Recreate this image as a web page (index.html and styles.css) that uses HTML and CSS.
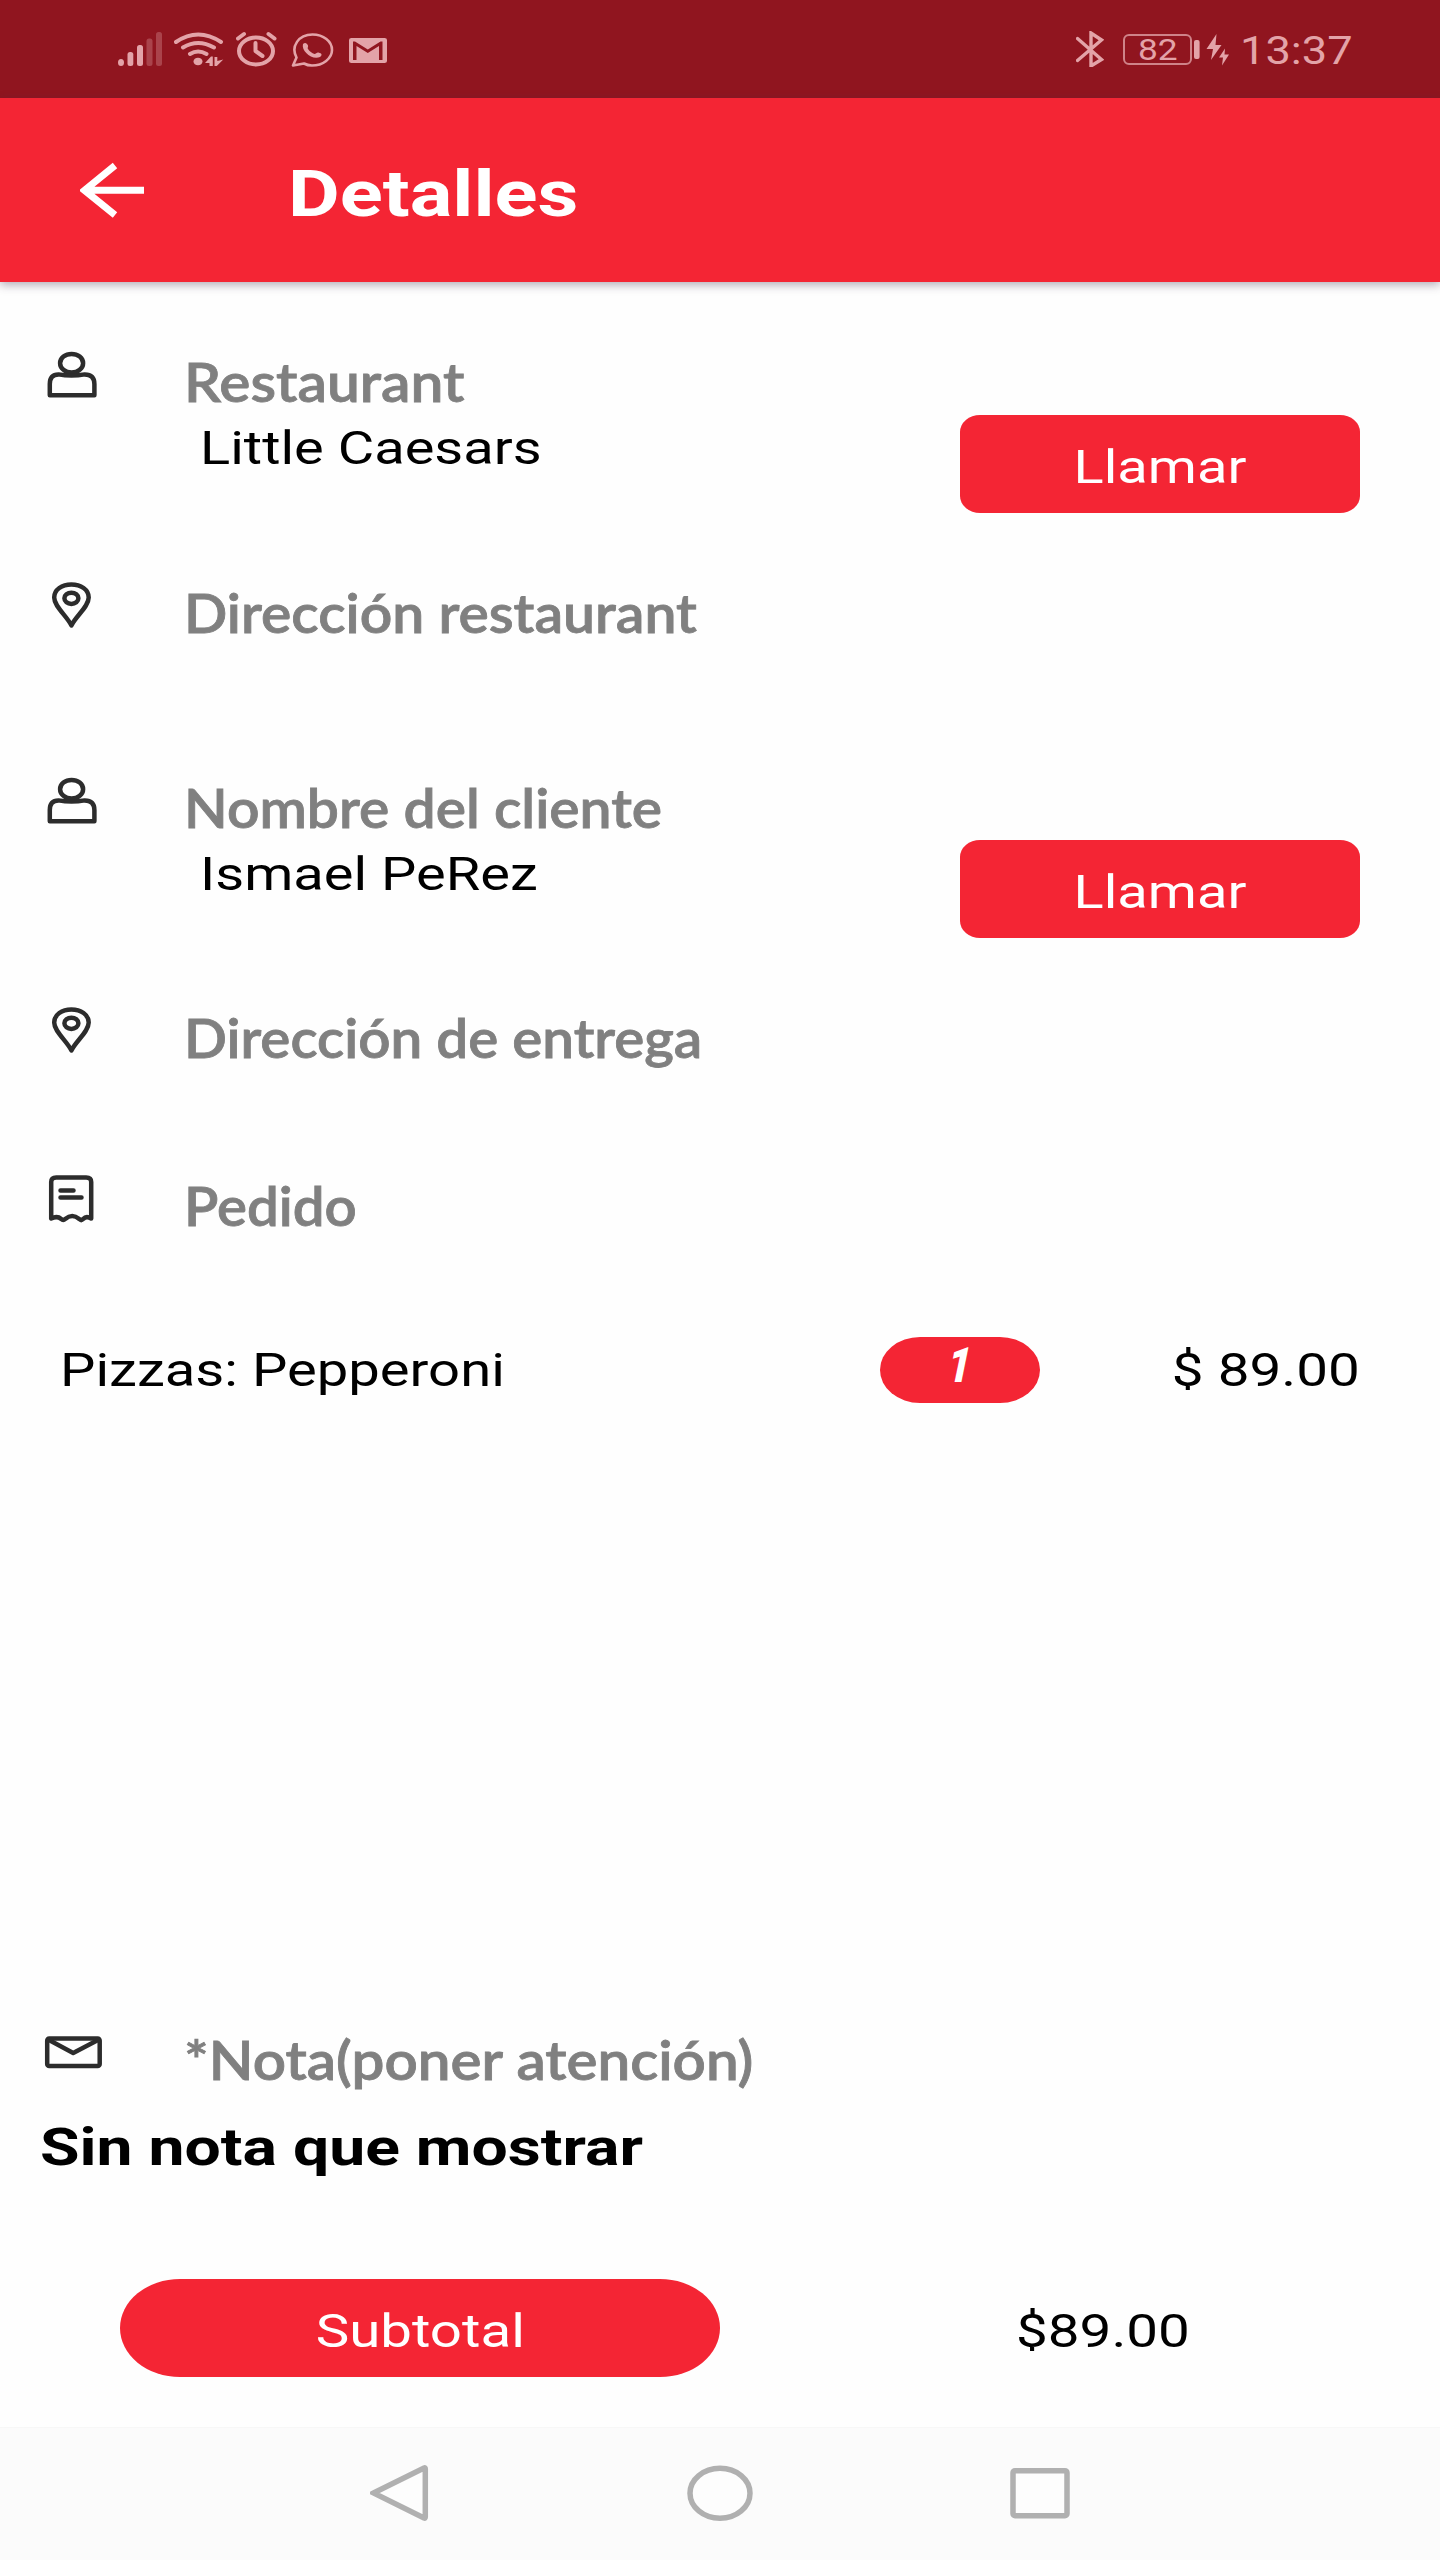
FILE: index.html
```
<!DOCTYPE html>
<html lang="es">
<head>
<meta charset="utf-8">
<title>Detalles</title>
<link rel="stylesheet" href="styles.css">
</head>
<body>
<svg class="defs" aria-hidden="true">
  <symbol id="person" viewBox="0 0 60 50">
    <ellipse cx="29.6" cy="14.200" rx="11.5" ry="9.3"/>
    <path d="M7.8 46.2V35q0-9.6 8.6-9.6 13 2.4 26.4 0 9.6 0 9.6 9.6v11.2z"/>
  </symbol>
  <symbol id="pin" viewBox="0 0 60 50">
    <path d="M29.4 45.4C25 36 12.2 26.500 12.200 17.500 12.200 9.500 20 4.500 29.400 4.500S46.700 9.500 46.700 17.500C46.700 26.500 34 36 29.400 45.400z"/>
    <ellipse cx="29.400" cy="18.300" rx="7" ry="5.600"/>
  </symbol>
  <symbol id="ticket" viewBox="0 0 60 50">
    <path d="M9.200 45.500V9q0-4.500 5-4.500h30q5 0 5 4.500v36.500q-5-3-8 .5-2 2-4 0-7-6-14 0-2 2-4 0-4-3.500-10-.5z"/>
    <path d="M18.500 17.500h13M18.500 24.500h21"/>
  </symbol>
  <symbol id="mail" viewBox="0 0 60 50">
    <rect x="5.200" y="11.500" width="52.500" height="27.500" rx="2"/>
    <path d="M7 13l24.200 13L56 13"/>
  </symbol>
</svg>

<header class="status">
  <svg class="s-signal" viewBox="118 31 44 36">
    <ellipse cx="121" cy="62.500" rx="3" ry="3.500"/>
    <rect x="127.500" y="52" width="5.800" height="14" rx="2.500"/>
    <rect x="137" y="45" width="6" height="21" rx="2.500"/>
    <g opacity=".32"><rect x="146.500" y="38.500" width="6" height="27.500" rx="2.500"/><rect x="156" y="32" width="6" height="34" rx="2.500"/></g>
  </svg>
  <svg class="s-wifi" viewBox="174 31 50 36">
    <g class="line"><path d="M176 42q22-15 45 0M183 47.500q15-9 31 0M190 54q8-5 16.500 0"/></g>
    <ellipse cx="198" cy="61.500" rx="4.500" ry="3.800"/>
    <path d="M205 63l6-6.500h1.800V66H209.500v-3zM214.500 57h2.800v4l6-1.500-6.500 6.500h-2.300z"/>
  </svg>
  <svg class="s-alarm" viewBox="236 31 41 36">
    <g class="line"><ellipse cx="256" cy="51" rx="17" ry="13.500"/><path d="M238 38.500l6-4.500M274.500 38.500l-6-4.500M255.500 43v8l7 5"/></g>
  </svg>
  <svg class="s-whats" viewBox="291 31 43 36">
    <path class="line thin" d="M293 65.500l3.500-8c-6-11 2-23 16-23 11 0 19.500 7 19.500 15.500S323 65.500 312 65.500q-4.500 0-8-2z"/>
    <path d="M303 44c2-2 4-1 5 1.500.5 1.500-1 2.500 0 3.500 1.500 2.500 4 4 6.500 5 1.500-.5 2.500-2 4-1.500 3.500 1 4 2.500 1.500 4.500-8 3.500-19-6-17-13z"/>
  </svg>
  <svg class="s-gmail" viewBox="349 31 38 36">
    <path fill-rule="evenodd" d="M351.500 38h33q2.500 0 2.500 2v21q0 2-2.500 2h-33q-2.500 0-2.500-2V40q0-2 2.500-2zM353 41.500V60h3.500V46l11.300 7 11.200-7v14h3.500V41.500h-2l-12.700 8-12.800-8z"/>
  </svg>
  <div class="status-right">
    <svg class="s-bt" viewBox="1076 31 28 36"><path class="line sharp" d="M1077.500 38.500l24 21-10.500 6.500V33l10.500 7-24 20.500"/></svg>
    <span class="battery"><span class="wide">82</span></span>
    <svg class="s-charge" viewBox="1193 31 37 36">
      <rect x="1194" y="40" width="5.600" height="19" rx="2"/>
      <path d="M1216.500 34l-10 15h6.500l-2 11 10.500-15h-6zM1225 48.500l-6 9h4l-1 8 7-11h-4.500z"/>
    </svg>
    <span class="clock wide">13:37</span>
  </div>
</header>

<div class="appbar">
  <svg class="back" viewBox="80 162 65 56"><path d="M144 190.300H86M115 165.500L84.500 190.300 115 215"/></svg>
  <h1 class="wide">Detalles</h1>
</div>

<main>
  <section class="row r-person">
    <svg class="icon"><use href="#person"/></svg>
    <div class="info"><h2 class="f-rest">Restaurant</h2><p class="wide">Little Caesars</p></div>
    <button class="call"><span class="wide">Llamar</span></button>
  </section>
  <section class="row r-place">
    <svg class="icon"><use href="#pin"/></svg>
    <div class="info"><h2>Dirección restaurant</h2></div>
  </section>
  <section class="row r-person">
    <svg class="icon"><use href="#person"/></svg>
    <div class="info"><h2>Nombre del cliente</h2><p class="wide">Ismael PeRez</p></div>
    <button class="call"><span class="wide">Llamar</span></button>
  </section>
  <section class="row r-delivery">
    <svg class="icon"><use href="#pin"/></svg>
    <div class="info"><h2 class="f-ent">Dirección de entrega</h2></div>
  </section>
  <section class="row r-order">
    <svg class="icon"><use href="#ticket"/></svg>
    <div class="info"><h2 class="f-ped">Pedido</h2></div>
  </section>
  <section class="items">
    <div class="item">
      <span class="name"><span class="wide">Pizzas: Pepperoni</span></span>
      <span class="qty"><span>1</span></span>
      <span class="price wide">$ 89.00</span>
    </div>
  </section>
  <section class="row r-note">
    <svg class="icon"><use href="#mail"/></svg>
    <div class="info"><h2 class="f-nota">*Nota(poner atención)</h2></div>
  </section>
  <p class="note"><span class="wide">Sin nota que mostrar</span></p>
  <section class="total">
    <div class="pill"><span class="wide">Subtotal</span></div>
    <span class="sum wide">$89.00</span>
  </section>
</main>

<nav>
  <svg viewBox="370 2464 60 58"><path d="M373.500 2493L424 2468q1.300-.5 1.300 1v48q0 1.500-1.300 1z"/></svg>
  <svg class="home" viewBox="686 2464 68 58"><ellipse cx="720" cy="2493.200" rx="30" ry="25"/></svg>
  <svg class="recent" viewBox="1009 2464 62 58"><rect x="1013" y="2470.700" width="54" height="45" rx="2"/></svg>
</nav>
</body>
</html>
```
FILE: styles.css
```
* { box-sizing: border-box; margin: 0; padding: 0; }
body {
  width: 1440px;
  height: 2560px;
  display: flex;
  flex-direction: column;
  background: #fefefe;
  color: #000;
  font: 46px/54px Roboto, sans-serif;
  overflow: hidden;
}
svg { display: block; flex: none; }
.defs { display: none; }

.wide { display: inline-block; white-space: nowrap; transform: scaleX(1.218); transform-origin: left; }

/* status bar */
.status {
  flex: none;
  height: 98px;
  padding: 31px 0 0 118px;
  display: flex;
  background: #90151f;
  color: #e3a3a8;
  fill: #e3a3a8;
}
.status svg { height: 36px; }
.line { fill: none; stroke: #e3a3a8; stroke-width: 4; stroke-linecap: round; stroke-linejoin: round; }
.thin { stroke-width: 2.6; }
.sharp { stroke-width: 3.4; stroke-linejoin: miter; }
.s-signal { width: 44px; }
.s-wifi { width: 50px; margin-left: 12px; }
.s-alarm { width: 41px; margin-left: 12px; }
.s-whats { width: 43px; margin-left: 14px; }
.s-gmail { width: 38px; margin-left: 15px; }
.status-right { display: flex; margin-left: 689px; }
.s-bt { width: 28px; }
.battery {
  width: 69px;
  height: 31px;
  margin: 3px 0 0 19px;
  padding-left: 13px;
  border: 2px solid #cf8389;
  border-radius: 6px;
  font-size: 29px;
  line-height: 29px;
}
.s-charge { width: 37px; margin-left: 1px; }
.status .clock { margin-left: 10px; font-size: 38px; line-height: 40px; transform: scaleX(1.19); }

/* app bar */
.appbar {
  flex: none;
  height: 184px;
  padding: 64px 0 0 80px;
  display: flex;
  background: #f42534;
  color: #fff;
  box-shadow: 0 3px 9px rgba(60, 40, 70, .38);
}
.back { width: 65px; height: 56px; fill: none; stroke: #fff; stroke-width: 7; }
.appbar h1 { margin: -6px 0 0 143px; font-size: 65.600px; line-height: 76px; height: 76px; transform: scaleX(1.214); }

main { flex: 1; padding-top: 67px; display: flex; flex-direction: column; }
.row { flex: none; display: flex; }
.r-person { height: 230.500px; }
.r-place { height: 195px; }
.r-delivery { height: 168px; }
.r-order { height: 164px; }
.r-note { height: 89px; }
.icon { width: 60px; height: 50px; margin-left: 42px; fill: none; stroke: #2c2c2c; stroke-width: 4.500; stroke-linecap: round; stroke-linejoin: round; }
.info { width: 858px; padding-left: 81.500px; }
h2 {
  padding-top: 1px;
  height: 64px;
  font: 600 53px/64px Lato, sans-serif;
  color: #808080;
  -webkit-text-stroke: .8px #808080;
  white-space: nowrap;
  transform: scaleX(1.076);
  transform-origin: left;
}
h2.f-rest { transform: scaleX(1.106); }
h2.f-ent { transform: scaleX(1.067); }
h2.f-ped { transform: scaleX(1.064); }
h2.f-nota { transform: scaleX(1.101); }
.info p { margin: 8px 0 0 16px; }
.call {
  width: 400px;
  height: 98px;
  margin-top: 65.500px;
  border: 0;
  border-radius: 20px / 17px;
  background: #f42534;
  color: #fff;
  font: inherit;
  padding-top: 6px;
}
.call .wide, .pill .wide { transform-origin: center; }

.items { flex: none; height: 690px; }
.item { display: flex; height: 66px; padding: 0 80px 0 60px; }
.item .name { width: 820px; line-height: 67px; }
.name .wide { transform: scaleX(1.221); }
.item .price { margin-left: auto; line-height: 67px; transform: scaleX(1.23); transform-origin: right; }
.qty {
  width: 160px;
  height: 66px;
  border-radius: 40px / 33px;
  background: #f42534;
  color: #fff;
  text-align: center;
  font: italic 900 49px/58px Roboto, sans-serif;
}
.qty span { display: inline-block; transform: scaleX(.85) skewX(-4deg); }

.note { padding-left: 40px; font-size: 52.500px; line-height: 62px; font-weight: bold; }
.note .wide { transform: scaleX(1.224); }
.total { display: flex; margin-top: 101px; padding-left: 120px; line-height: 105px; }
.pill {
  width: 600px;
  height: 98px;
  border-radius: 60px / 49px;
  background: #f42534;
  color: #fff;
  text-align: center;
}
.pill .wide { transform: scaleX(1.227); }
.total .sum { margin-left: 296px; transform: scaleX(1.23); }

/* system navigation */
nav {
  flex: none;
  height: 133px;
  padding: 36px 0 0 370px;
  display: flex;
  background: #fbfbfb;
  border-top: 1px solid #f7f7f7;
  fill: #fdfdfd;
  stroke: #b0b0b0;
  stroke-width: 5.500;
}
nav svg { width: 60px; height: 58px; }
nav .home { width: 68px; margin-left: 256px; }
nav .recent { width: 62px; margin-left: 255px; }
```
